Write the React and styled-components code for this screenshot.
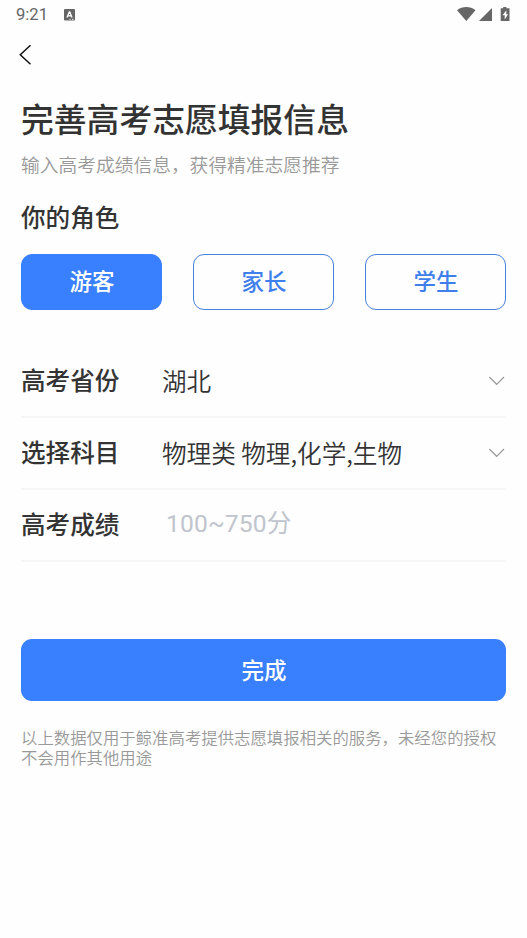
import React from "react";
import styled, { createGlobalStyle } from "styled-components";

const GlobalStyle = createGlobalStyle`
  * { box-sizing: border-box; }
  body {
    margin: 0;
    background: #fefefe;
    color: #333;
    font-family: Roboto, "Noto Sans CJK SC", sans-serif;
  }
  button, input { font-family: inherit; }
`;

const Screen = styled.div`
  width: 100%;
  min-height: 938px;
  background: #fefefe;
`;

const StatusBar = styled.header`
  display: flex;
  align-items: center;
  height: 30px;
  padding: 0 16px;
  color: #666;
`;

const Clock = styled.span`
  width: 48px;
  font-size: 16.6px;
  line-height: 30px;
`;

const StatusIcons = styled.div`
  display: flex;
  margin-left: auto;
`;

const NavBar = styled.nav`
  display: flex;
  align-items: center;
  height: 50px;
  padding-left: 18px;
`;

const BackButton = styled.button`
  display: flex;
  padding: 0;
  border: 0;
  background: none;
`;

const Content = styled.main`
  padding: 21px 21px 0;
`;

const Title = styled.h1`
  margin: 0;
  font-size: 32.8px;
  font-weight: 500;
  line-height: 40px;
  white-space: nowrap;
`;

const Subtitle = styled.p`
  margin: 13px 0 0;
  color: #999;
  font-size: 18.74px;
  font-weight: 350;
  line-height: 24px;
`;

const SectionTitle = styled.h2`
  margin: 25px 0 0;
  font-size: 24.6px;
  font-weight: 500;
  line-height: 32px;
`;

const RoleGroup = styled.div`
  display: grid;
  grid-template-columns: repeat(3, 1fr);
  gap: 31px;
  margin-top: 19px;
`;

const RoleButton = styled.button`
  height: 56px;
  padding: 0 0 0 1px;
  border: 1px solid ${(p) => (p.$active ? "#3880ff" : "#4581df")};
  border-radius: 11px;
  background: ${(p) => (p.$active ? "#3880ff" : "transparent")};
  color: ${(p) => (p.$active ? "#fff" : "#3e7fec")};
  font-size: 22.5px;
  font-weight: 500;
  line-height: 54px;
`;

const Form = styled.div`
  margin-top: 36px;
`;

const Row = styled.label`
  display: flex;
  align-items: center;
  height: 72px;
  border-bottom: 2px solid #f6f6f6;
`;

const RowLabel = styled.span`
  width: 141px;
  padding-top: 1px;
  font-size: 24.6px;
  font-weight: 500;
  line-height: 36px;
`;

const RowValue = styled.span`
  flex: 1;
  padding-bottom: 3px;
  font-family: "Noto Sans CJK SC", sans-serif;
  font-size: 24.6px;
  font-weight: 350;
  line-height: 36px;
  white-space: pre;
`;

const ScoreInput = styled.input`
  flex: 1;
  min-width: 0;
  height: 36px;
  margin-bottom: 4px;
  padding: 0 0 0 4px;
  border: 0;
  outline: 0;
  background: none;
  color: #333;
  font-size: 24.6px;
  letter-spacing: 0.15px;

  &::placeholder { color: #c0c4cc; opacity: 1; }
`;

const SubmitButton = styled.button`
  display: block;
  width: 100%;
  height: 62px;
  margin-top: 77px;
  padding: 0 0 2px 1px;
  border: 0;
  border-radius: 11px;
  background: #3880ff;
  color: #fff;
  font-size: 22.5px;
  font-weight: 500;
`;

const Notice = styled.p`
  margin: 28px 0 0;
  color: #999;
  font-size: 16.4px;
  font-weight: 350;
  line-height: 19.5px;
`;

const InputMethodIcon = () => (
  <svg width="11" height="12" viewBox="0 0 11 12">
    <rect width="11" height="11.5" rx="1" fill="#666" />
    <path d="M3 8.500 5.300 3h.5L8 8.500M4 6.800h3" fill="none" stroke="#fff" strokeWidth="1.3" />
    <path d="M5.500 10.300h1.200M8 10.300h1.500" stroke="#fff" strokeWidth="0.9" />
  </svg>
);

const SignalIcons = () => (
  <svg width="54" height="16" viewBox="0 0 54 16" fill="#666">
    <path d="M0 3.300C5.300-1.100 13.200-1.100 18.500 3.300L9.300 14Z" />
    <path d="M22 14 35 1v13Z" />
    <path d="M46.200 0h3.200v1.200h3.100v12.800h-8.800V1.200h2.500Z" />
    <path d="M49.300 3.200 45.600 8.300h2.100v4.100l3.400-5.200h-1.800Z" fill="#fff" />
  </svg>
);

const BackIcon = () => (
  <svg width="15" height="22" viewBox="0 0 15 22" fill="none">
    <path d="M12.500 1.300 2.300 10.800l10.200 9.500" stroke="#111" strokeWidth="1.500" />
  </svg>
);

const Chevron = styled.svg`
  margin-bottom: 1px;
`;

const ChevronIcon = () => (
  <Chevron width="18" height="10" viewBox="0 0 18 10" fill="none">
    <path d="m1.300 1 7.400 7.300L16 1" stroke="#999" strokeWidth="1.200" />
  </Chevron>
);

const roles = ["游客", "家长", "学生"];
const selections = [
  { label: "高考省份", value: "湖北" },
  { label: "选择科目", value: "物理类 物理,化学,生物" },
];

export default function App() {
  return (
    <Screen>
      <GlobalStyle />
      <StatusBar>
        <Clock>9:21</Clock>
        <InputMethodIcon />
        <StatusIcons><SignalIcons /></StatusIcons>
      </StatusBar>
      <NavBar>
        <BackButton aria-label="返回"><BackIcon /></BackButton>
      </NavBar>
      <Content>
        <Title>完善高考志愿填报信息</Title>
        <Subtitle>输入高考成绩信息，获得精准志愿推荐</Subtitle>
        <SectionTitle>你的角色</SectionTitle>
        <RoleGroup>
          {roles.map((role, i) => (
            <RoleButton key={role} $active={i === 0}>{role}</RoleButton>
          ))}
        </RoleGroup>
        <Form>
          {selections.map(({ label, value }) => (
            <Row key={label}>
              <RowLabel>{label}</RowLabel>
              <RowValue>{value}</RowValue>
              <ChevronIcon />
            </Row>
          ))}
          <Row>
            <RowLabel>高考成绩</RowLabel>
            <ScoreInput placeholder="100~750分" />
          </Row>
        </Form>
        <SubmitButton>完成</SubmitButton>
        <Notice>以上数据仅用于鲸准高考提供志愿填报相关的服务，未经您的授权不会用作其他用途</Notice>
      </Content>
    </Screen>
  );
}
